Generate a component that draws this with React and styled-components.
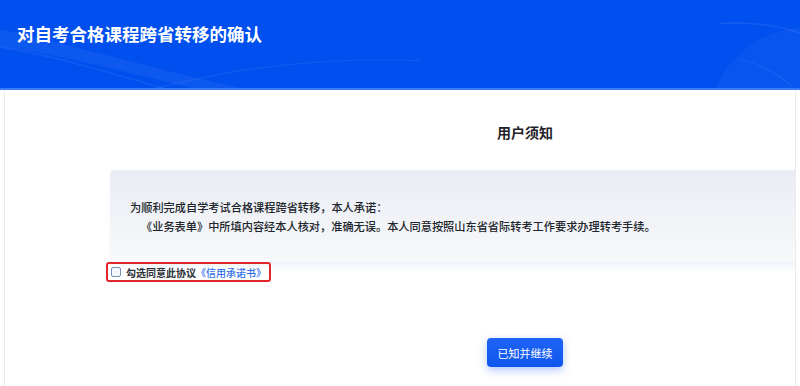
import React from 'react';
import styled, { createGlobalStyle } from 'styled-components';

const Global = createGlobalStyle`
  html, body {
    margin: 0;
    padding: 0;
    background: #ffffff;
  }
  body {
    font-family: "Noto Sans CJK SC", "Noto Sans", "Liberation Sans", sans-serif;
  }
`;

const Page = styled.div`
  width: 800px;
  height: 386px;
  overflow: hidden;
  display: flex;
  flex-direction: column;
  background: #ffffff;
`;

const Header = styled.header`
  position: relative;
  height: 90px;
  flex-shrink: 0;
  display: flex;
  align-items: center;
  padding: 0 17px 20px;
  box-sizing: border-box;
  background: #0050ef;
  border-bottom: 2px solid #3a7cf4;
  overflow: hidden;
`;

const Waves = styled.svg`
  position: absolute;
  inset: 0;
  width: 100%;
  height: 100%;
  pointer-events: none;
`;

const Title = styled.h1`
  position: relative;
  margin: 0;
  color: #ffffff;
  font-size: 17.5px;
  font-weight: 700;
  line-height: 24px;
`;

const Main = styled.main`
  flex: 1;
  margin: 0 4px;
  border-left: 1px solid #ececef;
  border-right: 1px solid #ececef;
  overflow: hidden;
`;

const Column = styled.div`
  width: 830px;
  margin-left: 105px;
  display: flex;
  flex-direction: column;
  align-items: flex-start;
`;

const SectionTitle = styled.h2`
  align-self: stretch;
  margin: 32px 0 28px;
  text-align: center;
  font-size: 14px;
  line-height: 20px;
  font-weight: 700;
  color: #1f2329;
`;

const Notice = styled.div`
  align-self: stretch;
  box-sizing: border-box;
  height: 92px;
  padding: 28px 20px 26px;
  border-radius: 4px 0 0 4px;
  background: linear-gradient(180deg, #e9edf4 0%, #f1f3f7 55%, #f8f9fb 100%);
  box-shadow: 0 6px 8px -4px rgba(150, 185, 235, 0.25);
`;

const Line = styled.p`
  margin: 0;
  font-size: 11.2px;
  line-height: 19px;
  font-weight: 500;
  color: #20242b;
  padding-left: ${p => (p.$indent ? '11px' : '0')};
`;

const Agree = styled.label`
  display: inline-flex;
  align-items: center;
  gap: 5px;
  margin-left: -4px;
  height: 20px;
  box-sizing: border-box;
  padding: 0 3px;
  border: 2px solid #e0252d;
  border-radius: 3px;
  font-size: 10px;
  font-weight: 700;
  color: #2b2f36;
  cursor: pointer;
`;

const Box = styled.input`
  appearance: none;
  margin: 0;
  width: 10px;
  height: 10px;
  border: 1px solid #7c91b6;
  border-radius: 2px;
  background: #f4f7fc;
  box-sizing: border-box;
`;

const Link = styled.a`
  color: #2f6ee8;
  font-weight: 500;
  text-decoration: none;
`;

const Button = styled.button`
  align-self: center;
  margin-top: 56px;
  width: 76px;
  height: 29px;
  border: none;
  border-radius: 4px;
  background: linear-gradient(180deg, #1f64f5 0%, #0f56ee 100%);
  box-shadow: 0 3px 8px rgba(30, 90, 240, 0.35);
  color: #ffffff;
  font-family: inherit;
  font-size: 11px;
  font-weight: 400;
  cursor: pointer;
`;

export default function App() {
  return (
    <>
      <Global />
      <Page>
        <Header>
          <Waves viewBox="0 0 800 90" preserveAspectRatio="none">
            <path d="M0 30 C 70 45, 150 70, 250 92 L 200 92 C 130 75, 60 55, 0 48 Z" fill="#ffffff" fillOpacity="0.05" />
            <path d="M0 48 C 60 58, 110 75, 170 92" stroke="#ffffff" strokeOpacity="0.07" strokeWidth="1.5" fill="none" />
            <path d="M150 92 C 230 70, 320 58, 420 62" stroke="#ffffff" strokeOpacity="0.06" strokeWidth="1.5" fill="none" />
            <path d="M715 92 C 730 55, 760 32, 800 28 L 800 92 Z" fill="#ffffff" fillOpacity="0.03" />
            <path d="M720 24 C 760 22, 785 28, 800 34" stroke="#ffffff" strokeOpacity="0.08" strokeWidth="1.5" fill="none" />
            <path d="M740 60 C 765 68, 785 80, 795 92" stroke="#ffffff" strokeOpacity="0.06" strokeWidth="1.5" fill="none" />
          </Waves>
          <Title>对自考合格课程跨省转移的确认</Title>
        </Header>
        <Main>
          <Column>
            <SectionTitle>用户须知</SectionTitle>
            <Notice>
              <Line>为顺利完成自学考试合格课程跨省转移，本人承诺：</Line>
              <Line $indent>《业务表单》中所填内容经本人核对，准确无误。本人同意按照山东省省际转考工作要求办理转考手续。</Line>
            </Notice>
            <Agree>
              <Box type="checkbox" />
              <span>
                勾选同意此协议<Link href="#">《信用承诺书》</Link>
              </span>
            </Agree>
            <Button type="button">已知并继续</Button>
          </Column>
        </Main>
      </Page>
    </>
  );
}
